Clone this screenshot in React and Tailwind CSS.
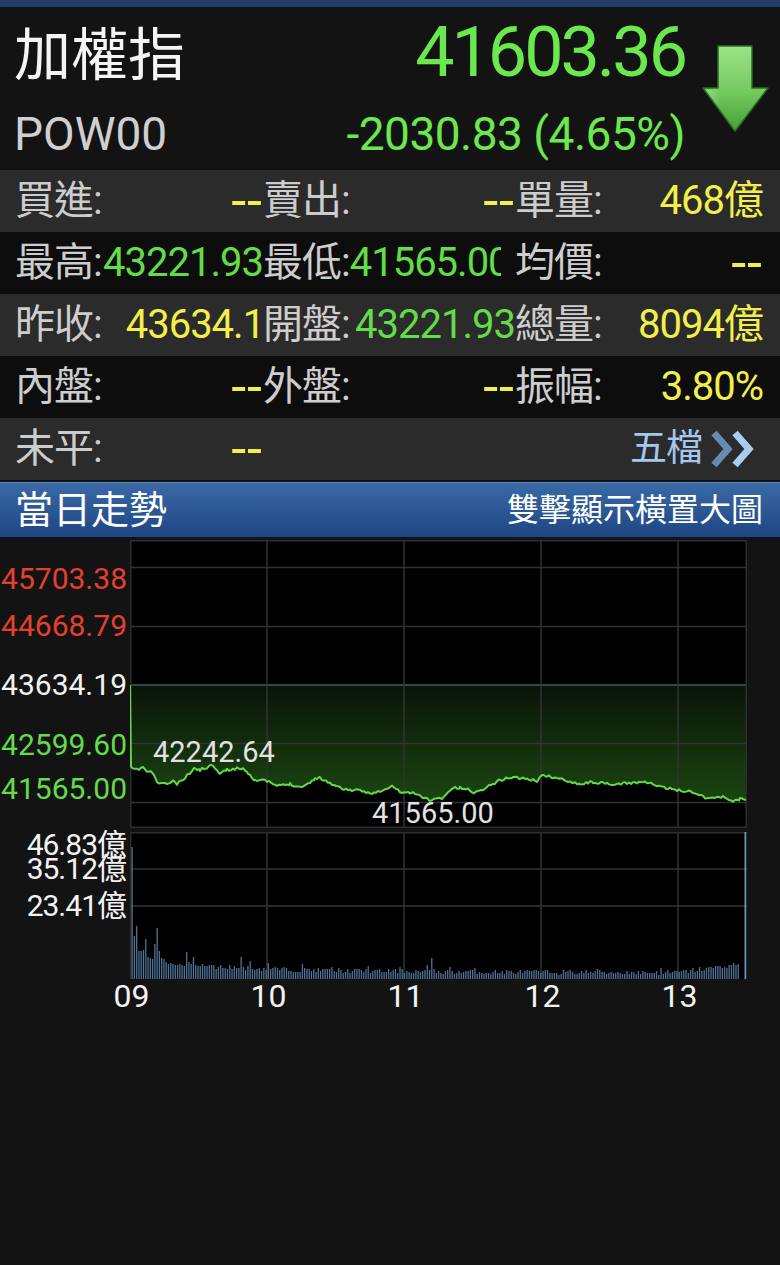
import React from 'react';

// deterministic noise so the chart looks the same on every render
let seed = 11;
const rnd = () => {
  seed = (seed * 16807) % 2147483647;
  return (seed - 1) / 2147483646;
};

// price line key points, page coordinates (plot starts at x 130, y 540)
const KEY = [
  [130, 685], [131, 768], [137, 770], [143, 767], [147, 772], [152, 772], [157, 782], [163, 784],
  [170, 783], [173, 781], [177, 784], [183, 780], [190, 773], [195, 768], [200, 770], [205, 768],
  [213, 765], [220, 773], [227, 770], [233, 769], [243, 768], [248, 773], [255, 780], [267, 781],
  [277, 786], [290, 784], [300, 787], [310, 783], [315, 778], [320, 778], [330, 783], [340, 788],
  [350, 790], [360, 791], [370, 793], [383, 791], [392, 786], [400, 792], [413, 793], [430, 800],
  [442, 798], [453, 788], [460, 788], [470, 790], [475, 793], [487, 787], [500, 780], [513, 777],
  [527, 779], [537, 781], [540, 776], [547, 776], [560, 779], [573, 782], [580, 784], [593, 782],
  [613, 785], [627, 783], [647, 782], [660, 787], [677, 790], [693, 792], [707, 798], [723, 797],
  [733, 801], [740, 799], [746, 800],
];

const pricePts = [[0, 145]];
for (let k = 1; k < KEY.length - 1; k++) {
  const [x0, y0] = KEY[k];
  const [x1, y1] = KEY[k + 1];
  for (let x = x0; x < x1; x += 2) {
    const t = (x - x0) / (x1 - x0);
    const y = y0 + (y1 - y0) * t + (rnd() - 0.5) * 2.6;
    pricePts.push([x - 130, +(y - 540).toFixed(1)]);
  }
}
pricePts.push([616, 260]);
const linePath = 'M' + pricePts.map((p) => p.join(' ')).join(' L');
const fillPath = linePath + ' L616 145 L0 145 Z';

const EARLY = [132, 43, 53, 28, 28, 29, 40, 22, 21, 20, 35, 51, 28, 21, 20, 17, 15, 16, 15, 14, 14, 15, 14, 13, 27, 17, 15, 22, 14, 13];
const SPIKES = { 48: 22, 52: 18, 60: 16, 75: 15, 88: 12, 104: 13, 118: 12, 130: 14, 132: 21, 140: 12, 151: 11, 205: 10, 233: 11 };
const vols = Array.from({ length: 268 }, (_, i) => {
  if (i < EARLY.length) return EARLY[i];
  if (SPIKES[i]) return SPIKES[i];
  return Math.round(4 + 7 * Math.exp(-(i - 30) / 50) + rnd() * 5 + (i > 240 ? (i - 240) * 0.3 : 0));
});

const YEL = 'text-[#f2ef4c]';
const GRN = 'text-[#62dc48]';
const DASH = 'text-[54px] tracking-[1px]';

const rows = [
  {
    bg: 'bg-[#2b2b2b]',
    cells: [
      { label: '買進:', value: '--', color: YEL, extra: DASH },
      { label: '賣出:', value: '--', color: YEL, extra: DASH },
      { label: '單量:', value: '468億', color: YEL },
    ],
  },
  {
    bg: 'bg-[#0d0d0d]',
    cells: [
      { label: '最高:', value: '43221.93', color: GRN },
      { label: '最低:', value: '41565.00', color: GRN, extra: 'mr-[14px]' },
      { label: '均價:', value: '--', color: YEL, extra: DASH },
    ],
  },
  {
    bg: 'bg-[#2b2b2b]',
    cells: [
      { label: '昨收:', value: '43634.19', color: YEL, extra: 'pl-[24px]' },
      { label: '開盤:', value: '43221.93', color: GRN },
      { label: '總量:', value: '8094億', color: YEL },
    ],
  },
  {
    bg: 'bg-[#0d0d0d]',
    cells: [
      { label: '內盤:', value: '--', color: YEL, extra: DASH },
      { label: '外盤:', value: '--', color: YEL, extra: DASH },
      { label: '振幅:', value: '3.80%', color: YEL },
    ],
  },
];

const widths = ['w-[248px]', 'w-[252px]', 'flex-1'];

function Cell({ label, value, color, extra, w }) {
  return (
    <div className={`flex min-w-0 items-center ${w}`}>
      <span className="shrink-0 text-[#cdcdcd]">{label}</span>
      <span className={`min-w-0 flex-1 overflow-hidden whitespace-nowrap text-right leading-[52px] ${color} ${extra ?? ''}`}>
        {value}
      </span>
    </div>
  );
}

function DownArrow() {
  return (
    <svg width="70" height="92" viewBox="0 0 70 92">
      <defs>
        <linearGradient id="arrowFill" x1="0" y1="0" x2="0" y2="1">
          <stop offset="0" stopColor="#9be486" />
          <stop offset="0.55" stopColor="#72c95c" />
          <stop offset="1" stopColor="#45a035" />
        </linearGradient>
        <linearGradient id="arrowShine" x1="0" y1="0" x2="1" y2="0">
          <stop offset="0" stopColor="#ffffff" stopOpacity="0.25" />
          <stop offset="0.5" stopColor="#ffffff" stopOpacity="0" />
        </linearGradient>
      </defs>
      <path d="M17 3 H51 V45 H67 L34 88 L2 45 H17 Z" fill="url(#arrowFill)" stroke="#2e6b22" strokeWidth="1.5" strokeLinejoin="round" />
      <path d="M19 5 H34 V86 L5 47 H19 Z" fill="url(#arrowShine)" />
    </svg>
  );
}

function Chevrons() {
  return (
    <svg width="50" height="40" viewBox="0 0 50 40">
      <path d="M4 4 L18 20 L4 36" fill="none" stroke="#6a8bb0" strokeWidth="7" />
      <path d="M25 4 L39 20 L25 36" fill="none" stroke="#a7cdf3" strokeWidth="7" />
    </svg>
  );
}

const gridColor = '#333';
const hours = [137, 274, 411, 548];

function PriceChart() {
  return (
    <svg width="617" height="288" viewBox="0 0 617 288" className="block">
      <defs>
        <linearGradient id="priceFill" x1="0" y1="145" x2="0" y2="262" gradientUnits="userSpaceOnUse">
          <stop offset="0" stopColor="#0a1408" />
          <stop offset="1" stopColor="#1b4511" />
        </linearGradient>
      </defs>
      <rect x="0" y="0" width="617" height="288" fill="#000" />
      <path d={fillPath} fill="url(#priceFill)" />
      {[27, 86, 203, 262].map((y) => (
        <line key={y} x1="0" y1={y + 0.5} x2="617" y2={y + 0.5} stroke={gridColor} strokeWidth="1.5" />
      ))}
      <line x1="0" y1="145" x2="617" y2="145" stroke="#4a5560" strokeWidth="1.5" />
      {hours.map((x) => (
        <line key={x} x1={x} y1="0" x2={x} y2="288" stroke={gridColor} strokeWidth="1.5" />
      ))}
      <rect x="0.75" y="0.75" width="615.5" height="286.5" fill="none" stroke="#2e2e2e" strokeWidth="1.5" />
      <path d={linePath} fill="none" stroke="#63d84a" strokeWidth="2" strokeLinejoin="round" />
    </svg>
  );
}

function VolumeChart() {
  return (
    <svg width="617" height="147" viewBox="0 0 617 147" className="block">
      <rect x="0" y="0" width="617" height="147" fill="#000" />
      {[37, 74].map((y) => (
        <line key={y} x1="0" y1={y} x2="617" y2={y} stroke={gridColor} strokeWidth="1.5" />
      ))}
      {hours.map((x) => (
        <line key={x} x1={x} y1="0" x2={x} y2="147" stroke={gridColor} strokeWidth="1.5" />
      ))}
      <line x1="0" y1="0.75" x2="617" y2="0.75" stroke="#2e2e2e" strokeWidth="1.5" />
      <line x1="0.75" y1="0" x2="0.75" y2="147" stroke="#2e2e2e" strokeWidth="1.5" />
      {vols.map((h, i) => (
        <rect key={i} x={1.5 + i * 2.27} y={147 - h} width="1.3" height={h} fill="#4f7296" />
      ))}
      <rect x="614.5" y="0" width="1.8" height="147" fill="#6f95bb" />
    </svg>
  );
}

export default function App() {
  return (
    <div className="min-h-[1265px] w-[780px] bg-[#131313] font-[Roboto,'Noto_Sans_CJK_TC',sans-serif]">
      <div className="h-[7px] bg-[#1f3d68]" />

      {/* quote header */}
      <div className="flex h-[163px] bg-[#131313]">
        <div className="flex flex-1 flex-col pl-[14px]">
          <div className="flex h-[96px] items-center justify-between">
            <span className="text-[57px] leading-none text-[#f4f4f4]">加權指</span>
            <span className="-mt-[6px] text-[70px] leading-none tracking-[-3px] text-[#6be84e]">41603.36</span>
          </div>
          <div className="flex h-[67px] items-center justify-between pb-[6px]">
            <span className="text-[46px] leading-none text-[#cfcfcf]">POW00</span>
            <span className="text-[46px] leading-none tracking-[-0.5px] text-[#6be84e]">-2030.83 (4.65%)</span>
          </div>
        </div>
        <div className="w-[95px] pl-[16px] pt-[36px]">
          <DownArrow />
        </div>
      </div>

      {/* detail rows */}
      <div className="text-[40px] leading-[52px] tracking-[-1px]">
        {rows.map((row, r) => (
          <div key={r} className={`flex h-[62px] items-center pl-[15px] pr-[17px] ${row.bg}`}>
            {row.cells.map((c, i) => (
              <Cell key={i} {...c} w={widths[i]} />
            ))}
          </div>
        ))}
        <div className="flex h-[62px] items-center bg-[#2b2b2b] pl-[15px] pr-[20px]">
          <Cell label="未平:" value="--" color={YEL} extra={DASH} w="w-[248px]" />
          <div className="flex flex-1 items-center justify-end gap-[8px]">
            <span className="text-[37px] text-[#a3c7ee]">五檔</span>
            <Chevrons />
          </div>
        </div>
      </div>

      {/* section bar */}
      <div className="mt-[2px] flex h-[55px] items-center justify-between border-t border-[#5a86bf] bg-gradient-to-b from-[#3b6aa6] to-[#1d4683] pl-[15px] pr-[17px]">
        <span className="text-[38px] leading-none text-white">當日走勢</span>
        <span className="text-[32px] leading-none text-white">雙擊顯示橫置大圖</span>
      </div>

      {/* intraday chart */}
      <div className="pt-[3px]">
        <div className="flex">
          <div className="flex w-[130px] flex-col items-end pr-[3px] text-[30px] leading-[30px]">
            <span className="mt-[24px] text-[#e5402e]">45703.38</span>
            <span className="mt-[17px] text-[#e5402e]">44668.79</span>
            <span className="mt-[29px] text-[#f2f2f2]">43634.19</span>
            <span className="mt-[30px] text-[#62dc48]">42599.60</span>
            <span className="mt-[14px] text-[#62dc48]">41565.00</span>
          </div>
          <div className="relative">
            <PriceChart />
            <span className="absolute left-[23px] top-[197px] text-[29px] leading-[30px] text-[#e2e2e2]">42242.64</span>
            <span className="absolute left-[242px] top-[258px] text-[29px] leading-[30px] text-[#e2e2e2]">41565.00</span>
          </div>
        </div>

        <div className="mt-[4px] flex">
          <div className="flex w-[130px] flex-col items-end pr-[4px] text-[30px] leading-[26px] tracking-[-1px] text-[#f2f2f2]">
            <span>46.83億</span>
            <span className="-mt-[2px]">35.12億</span>
            <span className="mt-[11px]">23.41億</span>
          </div>
          <VolumeChart />
        </div>

        <div className="flex pl-[63px] text-[32px] leading-[34px] text-[#f2f2f2]">
          {['09', '10', '11', '12', '13'].map((h) => (
            <span key={h} className="w-[137px] text-center">{h}</span>
          ))}
        </div>
      </div>
    </div>
  );
}
